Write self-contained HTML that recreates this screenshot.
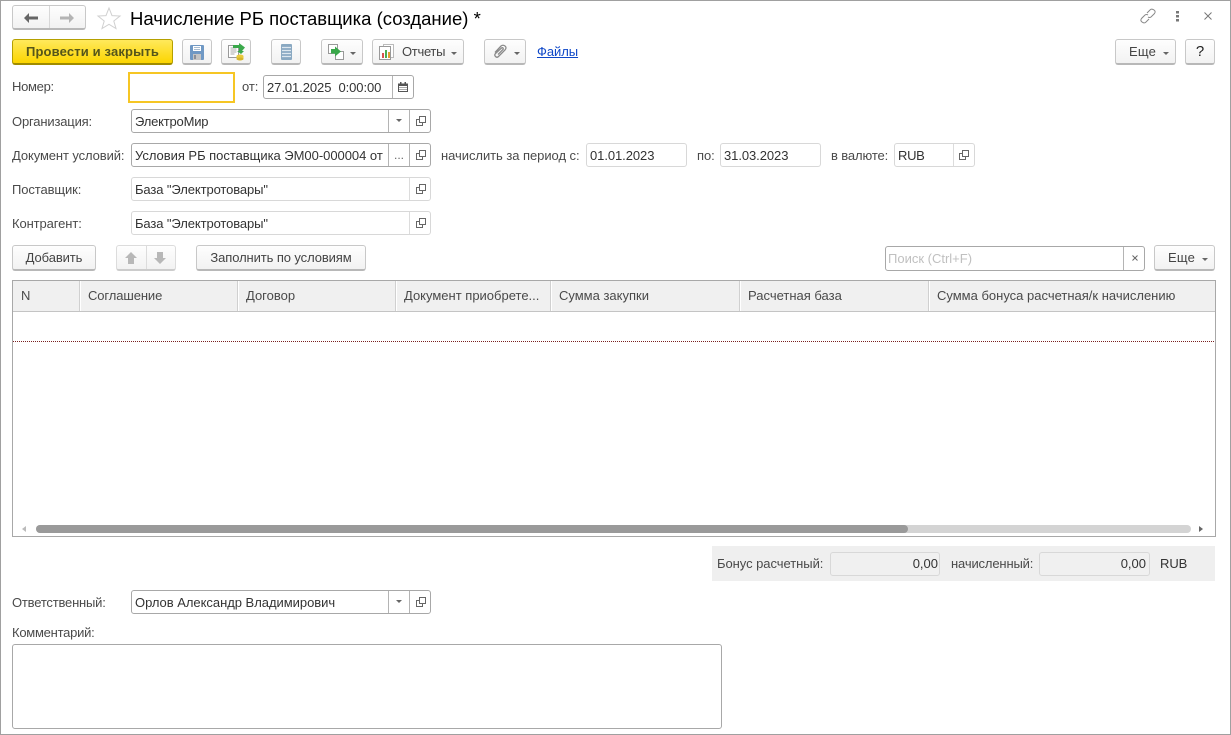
<!DOCTYPE html>
<html lang="ru"><head><meta charset="utf-8"><title>Начисление РБ поставщика</title>
<style>
html,body{margin:0;padding:0;background:#fff}
#p{position:relative;width:1231px;height:735px;overflow:hidden;background:#fff;font:13px/16px "Liberation Sans",sans-serif;color:#4a4a4a}
#p>*{position:absolute;box-sizing:border-box}
.frame{left:0;top:0;width:1231px;height:735px;border:1px solid #a0a0a0}
.t{white-space:nowrap;letter-spacing:-.05px}
.b{border:1px solid #c8c8c8;border-bottom:2px solid #b8b8b8;border-radius:3px;background:linear-gradient(#fefefe,#f2f2f2);color:#444;text-align:center;white-space:nowrap;line-height:24px;letter-spacing:-.1px}
.f{border:1px solid #a8a8a8;border-radius:3px;background:#fff;height:24px}
.fl{border-color:#d8d8d8}
.v{position:absolute;left:3px;top:4px;color:#333;white-space:nowrap;letter-spacing:-.07px}
.d{position:absolute;top:0;bottom:0;width:1px;background:#b4b4b4}
.fl .d{background:#dcdcdc}
.tri{position:absolute;width:0;height:0;border:3px solid transparent;border-top:3px solid #666;border-bottom:0}
.c{position:absolute;width:10px;height:10px}
.h{color:#4a4a4a;white-space:nowrap}
.s{top:281px;width:2px;height:30px;background:#fff;border-left:1px solid #d0d0d0}
svg{position:absolute;overflow:visible}
</style></head><body><div id="p">
<div class="frame"></div>

<!-- nav -->
<div class="b" style="left:12px;top:5px;width:74px;height:25px"></div>
<div style="left:49px;top:6px;width:1px;height:22px;background:#d8d8d8"></div>
<svg style="left:24px;top:13px" width="14" height="10"><path d="M0 5 5 0V3.500H14V6.500H5V10Z" fill="#666"/></svg>
<svg style="left:60px;top:13px" width="14" height="10"><path d="M14 5 9 0V3.500H0V6.500H9V10Z" fill="#b4b4b4"/></svg>
<svg style="left:97px;top:7px" width="24" height="22"><path d="M12 1 15 8.600 23 9 16.800 14 19 21.500 12 17.300 5 21.500 7.200 14 1 9 9 8.600Z" fill="#fff" stroke="#d0d0d0"/></svg>
<div class="t" style="left:130px;top:8px;font-size:18.5px;line-height:22px;color:#000;letter-spacing:0">Начисление РБ поставщика (создание) *</div>

<svg style="left:1140px;top:8px" width="16" height="16" fill="none" stroke="#888"><path d="M7 5 10.500 1.500Q12 .5 14 2T14.500 5.500L11 9Q9.500 10 8 9"/><path d="M9 11 5.500 14.500Q4 15.500 2 14T1.500 10.500L5 7Q6.500 6 8 7"/></svg>
<svg style="left:1176px;top:11px" width="4" height="11" fill="#777"><rect x="0" y="0" width="3" height="2.500"/><rect x="0" y="4" width="3" height="2.500"/><rect x="0" y="8" width="3" height="2.500"/></svg>
<svg style="left:1204px;top:12px" width="8" height="8" stroke="#777" fill="none"><path d="M.5 .5 7.500 7.500M7.500 .5 .5 7.500"/></svg>

<!-- toolbar -->
<div class="b" style="left:12px;top:39px;width:161px;height:26px;background:linear-gradient(#ffe95c,#fcd500);border-color:#b5a000;border-bottom-color:#a08c00;color:#55551a;font-weight:bold;letter-spacing:.15px">Провести и закрыть</div>
<div class="b" style="left:182px;top:39px;width:30px;height:26px"></div>
<svg style="left:190px;top:45px" width="14" height="15"><rect width="14" height="15" rx="1" fill="#6f98c4"/><rect x="3" y="1" width="8" height="5" fill="#fff"/><path d="M4 2.500H10M4 4.500H10" stroke="#a9bccf"/><rect x="3" y="9" width="8" height="6" fill="#c4c4c4"/><rect x="4" y="10" width="2" height="4" fill="#8a8f99"/></svg>
<div class="b" style="left:221px;top:39px;width:30px;height:26px"></div>
<svg style="left:228px;top:43px" width="18" height="18"><rect x="0.500" y="2.500" width="10" height="12" fill="#fff" stroke="#999"/><path d="M2.500 5H8.500M2.500 7H8.500M2.500 9H8.500M2.500 11H6.500" stroke="#aaa"/><path d="M5 2H11V0L17 4.500 14 8H16L13 11 9 8H11V5H5Z" fill="#39a84a"/><ellipse cx="12" cy="13" rx="3.500" ry="1.500" fill="#e8c93a"/><rect x="8.500" y="13" width="7" height="3" fill="#e8c93a"/><ellipse cx="12" cy="16" rx="3.500" ry="1.500" fill="#d6b52a"/></svg>
<div class="b" style="left:271px;top:39px;width:30px;height:26px"></div>
<svg style="left:281px;top:44px" width="11" height="16"><rect width="11" height="16" rx="1" fill="#8aa9c2"/><path d="M1 3.500H10M1 6.500H10M1 9.500H10M1 12.500H10" stroke="#dde7ef" stroke-width="1.200"/></svg>
<div class="b" style="left:321px;top:39px;width:42px;height:26px"></div>
<svg style="left:328px;top:44px" width="18" height="16"><rect x=".5" y=".5" width="9" height="9" fill="#fff" stroke="#999"/><rect x="7.500" y="7.500" width="8" height="8" fill="#fff" stroke="#999"/><path d="M3 5H7V2.500L13 7.500 7 12.500V9.500H3Z" fill="#39a84a"/></svg>
<div class="tri" style="left:350px;top:52px"></div>
<div class="b" style="left:372px;top:39px;width:92px;height:26px;text-align:left;padding-left:29px;letter-spacing:-.3px">Отчеты</div>
<svg style="left:379px;top:44px" width="16" height="16"><rect x="4.500" y=".5" width="10" height="13" fill="#fff" stroke="#bbb"/><rect x=".5" y="2.500" width="11" height="13" fill="#fff" stroke="#999"/><rect x="3" y="9" width="2" height="5" fill="#d9534f"/><rect x="6" y="6" width="2" height="8" fill="#4caf50"/><rect x="9" y="8" width="2" height="6" fill="#e0a030"/></svg>
<div class="tri" style="left:451px;top:52px"></div>
<div class="b" style="left:484px;top:39px;width:42px;height:26px"></div>
<svg style="left:493px;top:44px" width="14" height="15" fill="none" stroke="#8a8a8a" stroke-width="1.300"><path d="M2 8.500 8 2Q10 .5 12 2T12 6L5.500 12.500Q4 14 2.500 12.500T2.500 9.500L8.500 4Q9.500 3.200 10 4T10 5.500L5 10.500"/></svg>
<div class="tri" style="left:514px;top:52px"></div>
<div class="t" style="left:537px;top:44px;color:#0e47c8;text-decoration:underline">Файлы</div>
<div class="b" style="left:1115px;top:39px;width:61px;height:26px;text-align:left;padding-left:13px;letter-spacing:.2px">Еще</div>
<div class="tri" style="left:1163px;top:52px"></div>
<div class="b" style="left:1185px;top:39px;width:30px;height:26px;font-size:15px;color:#222">?</div>

<!-- form -->
<div class="t" style="left:12px;top:79px;letter-spacing:-.3px">Номер:</div>
<div style="left:128px;top:72px;width:107px;height:31px;border:2px solid #f6c624;background:#fff"></div>
<div class="t" style="left:242px;top:79px">от:</div>
<div class="f" style="left:263px;top:75px;width:151px"><span class="v">27.01.2025&nbsp; 0:00:00</span><i class="d" style="left:128px"></i>
<svg style="left:134px;top:6px" width="10" height="10"><path d="M0 1.500H10V10H0Z" fill="#555"/><rect x="2" y="0" width="1.500" height="2" fill="#555"/><rect x="6.500" y="0" width="1.500" height="2" fill="#555"/><path d="M1 4H9V9H1Z" fill="#fff"/><path d="M1.500 5.500H8.500M1.500 7.500H8.500" stroke="#555" stroke-dasharray="1 1"/></svg></div>

<div class="t" style="left:12px;top:114px;letter-spacing:-.17px">Организация:</div>
<div class="f" style="left:131px;top:109px;width:300px"><span class="v" style="letter-spacing:-.2px">ЭлектроМир</span><i class="d" style="left:256px"></i><i class="d" style="left:277px"></i><div class="tri" style="left:264px;top:9px"></div>
<svg class="c" style="left:284px;top:6px" fill="none" stroke="#666"><path d="M3.500 .5H9.500V6.500H3.500ZM3.500 3.500H.5V9.500H6.500V6.500"/></svg></div>

<div class="t" style="left:12px;top:148px;letter-spacing:-.1px">Документ условий:</div>
<div class="f" style="left:131px;top:143px;width:300px"><span class="v" style="letter-spacing:-.03px">Условия РБ поставщика ЭМ00-000004 от</span><i class="d" style="left:256px"></i><i class="d" style="left:277px"></i><span style="position:absolute;left:262px;top:3px;color:#666;font-size:12px">...</span>
<svg class="c" style="left:284px;top:6px" fill="none" stroke="#666"><path d="M3.500 .5H9.500V6.500H3.500ZM3.500 3.500H.5V9.500H6.500V6.500"/></svg></div>
<div class="t" style="left:441px;top:148px">начислить за период с:</div>
<div class="f fl" style="left:586px;top:143px;width:101px"><span class="v">01.01.2023</span></div>
<div class="t" style="left:697px;top:148px">по:</div>
<div class="f fl" style="left:720px;top:143px;width:101px"><span class="v">31.03.2023</span></div>
<div class="t" style="left:831px;top:148px;letter-spacing:-.12px">в валюте:</div>
<div class="f fl" style="left:894px;top:143px;width:81px"><span class="v" style="letter-spacing:-.3px">RUB</span><i class="d" style="left:58px"></i>
<svg class="c" style="left:64px;top:6px" fill="none" stroke="#666"><path d="M3.500 .5H9.500V6.500H3.500ZM3.500 3.500H.5V9.500H6.500V6.500"/></svg></div>

<div class="t" style="left:12px;top:182px;letter-spacing:-.1px">Поставщик:</div>
<div class="f fl" style="left:131px;top:177px;width:300px"><span class="v" style="letter-spacing:-.1px">База "Электротовары"</span><i class="d" style="left:277px"></i>
<svg class="c" style="left:284px;top:6px" fill="none" stroke="#666"><path d="M3.500 .5H9.500V6.500H3.500ZM3.500 3.500H.5V9.500H6.500V6.500"/></svg></div>
<div class="t" style="left:12px;top:216px;letter-spacing:-.1px">Контрагент:</div>
<div class="f fl" style="left:131px;top:211px;width:300px"><span class="v" style="letter-spacing:-.1px">База "Электротовары"</span><i class="d" style="left:277px"></i>
<svg class="c" style="left:284px;top:6px" fill="none" stroke="#666"><path d="M3.500 .5H9.500V6.500H3.500ZM3.500 3.500H.5V9.500H6.500V6.500"/></svg></div>

<!-- table bar -->
<div class="b" style="left:12px;top:245px;width:84px;height:26px">Добавить</div>
<div class="b" style="left:116px;top:245px;width:60px;height:26px;border-color:#dcdcdc;border-bottom-color:#ccc"></div>
<div style="left:146px;top:246px;width:1px;height:23px;background:#dcdcdc"></div>
<svg style="left:125px;top:252px" width="12" height="12"><path d="M6 0 12 6H9V12H3V6H0Z" fill="#b8b8b8"/></svg>
<svg style="left:154px;top:252px" width="12" height="12"><path d="M6 12 12 6H9V0H3V6H0Z" fill="#b8b8b8"/></svg>
<div class="b" style="left:196px;top:245px;width:170px;height:26px">Заполнить по условиям</div>
<div class="f" style="left:885px;top:246px;width:260px;height:25px"><span class="v" style="left:2px;color:#c0c0c0;letter-spacing:0">Поиск (Ctrl+F)</span><i class="d" style="left:237px"></i>
<svg style="left:246px;top:8px" width="6" height="6" stroke="#666" fill="none"><path d="M.5 .5 5.500 5.500M5.500 .5 .5 5.500"/></svg></div>
<div class="b" style="left:1154px;top:245px;width:61px;height:26px;text-align:left;padding-left:13px;letter-spacing:.2px">Еще</div>
<div class="tri" style="left:1202px;top:258px"></div>

<!-- table -->
<div style="left:12px;top:280px;width:1204px;height:257px;border:1px solid #a8a8a8;background:#fff"></div>
<div style="left:13px;top:281px;width:1202px;height:30px;background:#f0f0f0"></div>
<div style="left:13px;top:311px;width:1202px;height:1px;background:#c4c4c4"></div>
<i class="s" style="left:79px"></i><i class="s" style="left:237px"></i><i class="s" style="left:395px"></i><i class="s" style="left:550px"></i><i class="s" style="left:739px"></i><i class="s" style="left:928px"></i>
<div class="h" style="left:21px;top:288px">N</div>
<div class="h" style="left:88px;top:288px;letter-spacing:-.1px">Соглашение</div>
<div class="h" style="left:246px;top:288px">Договор</div>
<div class="h" style="left:404px;top:288px">Документ приобрете...</div>
<div class="h" style="left:559px;top:288px">Сумма закупки</div>
<div class="h" style="left:748px;top:288px">Расчетная база</div>
<div class="h" style="left:937px;top:288px">Сумма бонуса расчетная/к начислению</div>
<div style="left:13px;top:341px;width:1202px;height:1px;background:repeating-linear-gradient(90deg,#7a2020 0 1px,#fff 1px 2px)"></div>
<svg style="left:22px;top:526px" width="5" height="7"><path d="M4 0V6L0 3Z" fill="#bbb"/></svg>
<svg style="left:1199px;top:526px" width="5" height="7"><path d="M0 0V6L4 3Z" fill="#666"/></svg>
<div style="left:36px;top:525px;width:1155px;height:8px;border-radius:4px;background:#d4d4d4"></div>
<div style="left:36px;top:525px;width:872px;height:8px;border-radius:4px;background:#9a9a9a"></div>

<!-- totals -->
<div style="left:712px;top:546px;width:503px;height:35px;background:#efefef"></div>
<div class="t" style="left:717px;top:556px">Бонус расчетный:</div>
<div class="f fl" style="left:830px;top:552px;width:110px;background:#f0f0f0"><span style="position:absolute;right:1px;top:3px;color:#333">0,00</span></div>
<div class="t" style="left:951px;top:556px;letter-spacing:-.15px">начисленный:</div>
<div class="f fl" style="left:1039px;top:552px;width:111px;background:#f0f0f0"><span style="position:absolute;right:3px;top:3px;color:#333">0,00</span></div>
<div class="t" style="left:1160px;top:556px;color:#333">RUB</div>

<!-- bottom -->
<div class="t" style="left:12px;top:595px;letter-spacing:-.2px">Ответственный:</div>
<div class="f" style="left:131px;top:590px;width:300px"><span class="v" style="letter-spacing:-.03px">Орлов Александр Владимирович</span><i class="d" style="left:256px"></i><i class="d" style="left:277px"></i><div class="tri" style="left:264px;top:9px"></div>
<svg class="c" style="left:284px;top:6px" fill="none" stroke="#666"><path d="M3.500 .5H9.500V6.500H3.500ZM3.500 3.500H.5V9.500H6.500V6.500"/></svg></div>
<div class="t" style="left:12px;top:625px;letter-spacing:-.25px">Комментарий:</div>
<div class="f" style="left:12px;top:644px;width:710px;height:85px"></div>
</div></body></html>
